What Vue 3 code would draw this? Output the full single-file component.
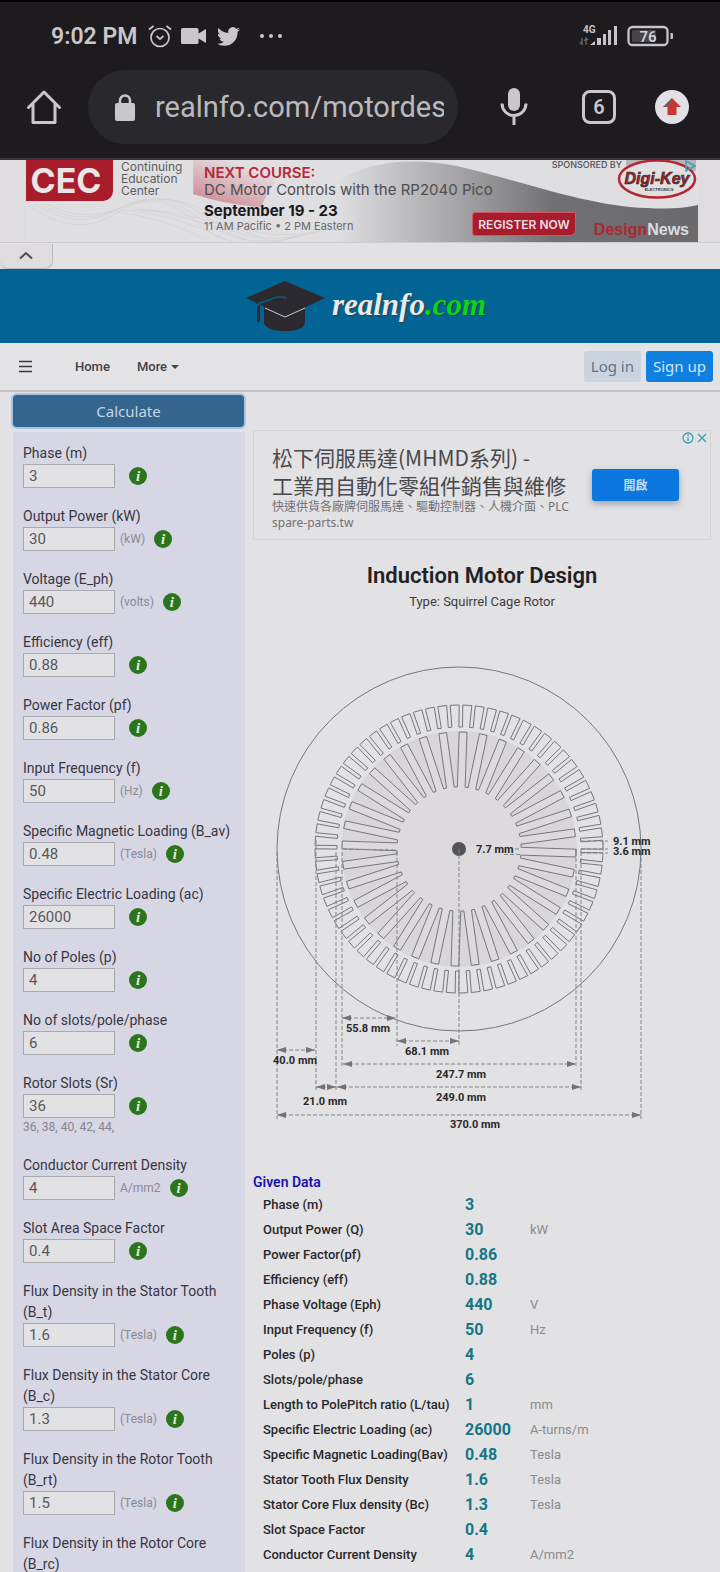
<script setup>
import { ref } from 'vue'

const fields = ref([
  { id: 'm', label: 'Phase (m)', value: '3' },
  { id: 'kw', label: 'Output Power (kW)', value: '30', unit: '(kW)' },
  { id: 'eph', label: 'Voltage (E_ph)', value: '440', unit: '(volts)' },
  { id: 'eff', label: 'Efficiency (eff)', value: '0.88' },
  { id: 'pf', label: 'Power Factor (pf)', value: '0.86' },
  { id: 'f', label: 'Input Frequency (f)', value: '50', unit: '(Hz)' },
  { id: 'bav', label: 'Specific Magnetic Loading (B_av)', value: '0.48', unit: '(Tesla)' },
  { id: 'ac', label: 'Specific Electric Loading (ac)', value: '26000' },
  { id: 'p', label: 'No of Poles (p)', value: '4' },
  { id: 'spp', label: 'No of slots/pole/phase', value: '6' },
  { id: 'sr', label: 'Rotor Slots (Sr)', value: '36', hint: '36, 38, 40, 42, 44,' },
  { id: 'ccd', label: 'Conductor Current Density', value: '4', unit: 'A/mm2' },
  { id: 'sf', label: 'Slot Area Space Factor', value: '0.4' },
  { id: 'bt', label: 'Flux Density in the Stator Tooth (B_t)', value: '1.6', unit: '(Tesla)' },
  { id: 'bc', label: 'Flux Density in the Stator Core (B_c)', value: '1.3', unit: '(Tesla)' },
  { id: 'brt', label: 'Flux Density in the Rotor Tooth (B_rt)', value: '1.5', unit: '(Tesla)' },
])

const given = [
  ['Phase (m)', '3', ''],
  ['Output Power (Q)', '30', 'kW'],
  ['Power Factor(pf)', '0.86', ''],
  ['Efficiency (eff)', '0.88', ''],
  ['Phase Voltage (Eph)', '440', 'V'],
  ['Input Frequency (f)', '50', 'Hz'],
  ['Poles (p)', '4', ''],
  ['Slots/pole/phase', '6', ''],
  ['Length to PolePitch ratio (L/tau)', '1', 'mm'],
  ['Specific Electric Loading (ac)', '26000', 'A-turns/m'],
  ['Specific Magnetic Loading(Bav)', '0.48', 'Tesla'],
  ['Stator Tooth Flux Density', '1.6', 'Tesla'],
  ['Stator Core Flux density (Bc)', '1.3', 'Tesla'],
  ['Slot Space Factor', '0.4', ''],
  ['Conductor Current Density', '4', 'A/mm2'],
]

// Motor cross-section, centred in the drawing
const CX = 206
const CY = 209

function place(x, r, deg) {
  const a = (deg * Math.PI) / 180
  const px = CX + x * Math.cos(a) + r * Math.sin(a)
  const py = CY + x * Math.sin(a) - r * Math.cos(a)
  return `${px.toFixed(1)},${py.toFixed(1)}`
}

// Outline of parallel-sided bars running between two radii
function ring(count, offset, half, from, to) {
  const pts = []
  for (let i = 0; i < count; i++) {
    const d = offset + (360 / count) * i
    pts.push(place(-half, from, d), place(-half, to, d), place(half, to, d), place(half, from, d))
  }
  return pts.join(' ')
}

const stator = ring(72, 0.8, 1.8, 144, 122)
const rotor = ring(36, 2, 3.9, 62, 117)

const guides = [
  [24, 212, 479], [63, 200, 452], [83, 212, 452], [89, 212, 427], [144, 212, 406],
  [206, 209, 406], [323, 212, 427], [328, 212, 452], [388, 212, 479],
]

const dims = [
  { x1: 89, x2: 143, y: 378, text: '55.8 mm', tx: 115, ty: 392 },
  { x1: 144, x2: 206, y: 401, text: '68.1 mm', tx: 174, ty: 415 },
  { x1: 24, x2: 62, y: 410, text: '40.0 mm', tx: 42, ty: 424 },
  { x1: 90, x2: 323, y: 424, text: '247.7 mm', tx: 208, ty: 438 },
  { x1: 63, x2: 83, y: 447, text: '21.0 mm', tx: 72, ty: 465 },
  { x1: 84, x2: 328, y: 447, text: '249.0 mm', tx: 208, ty: 461 },
  { x1: 24, x2: 388, y: 475, text: '370.0 mm', tx: 222, ty: 488 },
]
</script>

<template>
  <div class="page">
    <header class="chrome">
      <div class="status">
        <span class="clock">9:02 PM</span>
        <svg class="s-alarm" viewBox="0 0 24 24" width="24" height="24" fill="none" stroke="currentColor" stroke-width="1.7">
          <circle cx="12" cy="13.5" r="9" />
          <path d="M1 5.5 5.5 2M23 5.5 18.5 2M8.5 12l3.5 3.2 3.5-3.2" />
        </svg>
        <svg class="s-cam" viewBox="0 0 26 16" width="26" height="16" fill="currentColor">
          <path d="M1.500 0H16q1.500 0 1.500 1.500V5.500L25 1V15L17.500 10.500V14.500Q17.500 16 16 16H1.500Q0 16 0 14.500V1.500Q0 0 1.500 0Z" />
        </svg>
        <svg class="s-bird" viewBox="0 0 24 24" width="23" height="23" fill="currentColor">
          <path d="M23.950 4.570a10 10 0 0 1-2.820.770 4.960 4.960 0 0 0 2.160-2.720 9.900 9.900 0 0 1-3.120 1.180 4.920 4.920 0 0 0-8.380 4.480C7.690 8.090 4.070 6.130 1.640 3.160a4.820 4.820 0 0 0-.660 2.470c0 1.710.870 3.210 2.180 4.100a4.900 4.900 0 0 1-2.220-.620v.060a4.920 4.920 0 0 0 3.940 4.830 5 5 0 0 1-2.210.080 4.940 4.940 0 0 0 4.600 3.420A9.870 9.870 0 0 1 0 19.540a13.990 13.990 0 0 0 7.550 2.210c9.050 0 13.990-7.500 13.990-13.990 0-.210 0-.420-.010-.630a9.940 9.940 0 0 0 2.460-2.550z" />
        </svg>
        <svg class="s-dots" viewBox="0 0 24 6" width="24" height="6" fill="currentColor">
          <circle cx="3" cy="3" r="2" /><circle cx="12" cy="3" r="2" /><circle cx="21" cy="3" r="2" />
        </svg>
        <div class="signal">
          <svg viewBox="0 0 40 24" width="40" height="24">
            <text x="4" y="9" class="net">4G</text>
            <path d="M3 14v7M1 18l2 3M7 21v-7M5.500 17l1.500-3 2 2" fill="none" stroke="#6b696c" stroke-width="1.300" />
            <g fill="#c6c4c8">
              <path d="M11 21 16 17V21Z" /><rect x="18" y="14" width="4" height="7" /><rect x="24" y="10" width="3" height="11" />
              <rect x="29" y="6" width="3" height="15" /><rect x="35" y="2" width="3" height="19" />
            </g>
          </svg>
        </div>
        <svg class="battery" viewBox="0 0 48 22" width="48" height="22">
          <rect x="1.500" y="2" width="39" height="18" rx="4" fill="none" stroke="#c6c4c8" stroke-width="2.300" />
          <rect x="5" y="5" width="24" height="12" rx="1" fill="#464448" />
          <path d="M43.500 8h1.500a1 1 0 0 1 1 1v4a1 1 0 0 1-1 1h-1.500z" fill="#c6c4c8" />
          <text x="21" y="16.500" text-anchor="middle" class="pct">76</text>
        </svg>
      </div>
      <div class="toolbar">
        <button class="icon-btn" type="button" aria-label="Home">
          <svg viewBox="0 0 36 36" width="36" height="36" fill="none" stroke="currentColor" stroke-width="3">
            <path d="M2.500 18.500 18 3 33.500 18.500M7 15v18.500h22V15" stroke-linejoin="round" stroke-linecap="round" />
          </svg>
        </button>
        <div class="omnibox">
          <svg viewBox="0 0 20 27" width="20" height="27">
            <rect x="0" y="9" width="20" height="18" rx="2" fill="currentColor" />
            <path d="M5 10V6.500a5 5 0 0 1 10 0V10" fill="none" stroke="currentColor" stroke-width="2.500" />
          </svg>
          <input class="url" aria-label="Address" value="realnfo.com/motordesign" />
        </div>
        <button class="icon-btn mic" type="button" aria-label="Voice search">
          <svg viewBox="0 0 28 38" width="28" height="38">
            <rect x="8" y="0" width="12" height="23" rx="6" fill="currentColor" />
            <path d="M2 15.500a12 12 0 0 0 24 0M14 28v9" fill="none" stroke="currentColor" stroke-width="3" />
          </svg>
        </button>
        <button class="tabs" type="button" aria-label="Open tabs">6</button>
        <button class="icon-btn update" type="button" aria-label="Update browser">
          <svg viewBox="0 0 34 34" width="34" height="34">
            <circle cx="17" cy="17" r="17" fill="#e2e0e4" />
            <path d="M17 8 26 17H21.500V25H12.500V17H8Z" fill="#c5372f" />
            <path d="M17 8 8 17h4.500L17 12Z" fill="#7b5a5a" />
          </svg>
        </button>
      </div>
    </header>

    <section class="ad-strip">
      <div class="banner">
        <svg class="art" viewBox="0 0 671 82" preserveAspectRatio="none" aria-hidden="true">
          <defs>
            <linearGradient id="gr" x1="0" x2="1"><stop offset="0" stop-color="#dfdee0" /><stop offset=".35" stop-color="#a2a1a3" /><stop offset=".6" stop-color="#717072" /><stop offset="1" stop-color="#6a696b" /></linearGradient>
            <linearGradient id="pk" x1="0" y1="1" x2=".8" y2="0"><stop offset="0" stop-color="#cf7d88" /><stop offset=".8" stop-color="#e1dfe2" /></linearGradient>
          </defs>
          <rect width="671" height="82" fill="#dfdee0" />
          <g fill="none" stroke="#cfced1" stroke-width=".6">
            <path d="M2 45Q50 80 90 53T170 62T270 76" /><path d="M8 44Q52 72 92 49T176 60T280 74" />
            <path d="M14 44Q54 68 96 47T182 58T290 72" /><path d="M20 44Q58 64 100 46T188 56T300 70" />
            <path d="M90 52Q140 58 180 80M96 50Q150 54 200 80M104 49Q160 52 220 80M112 49Q170 52 240 80" />
          </g>
          <path d="M167 0H270Q245 20 235 47Q200 45 167 34Z" fill="url(#pk)" />
          <path d="M310 82V22Q355 -8 430 6C500 22 560 46 620 48Q650 50 671 45V82Z" fill="url(#gr)" />
        </svg>
        <strong class="cec">CEC</strong>
        <span class="center-name">Continuing<br />Education<br />Center</span>
        <div class="course">
          <strong class="next">NEXT COURSE:</strong>
          <span class="topic">DC Motor Controls with the RP2040 Pico</span>
          <strong class="date">September 19 - 23</strong>
          <span class="hours">11 AM Pacific • 2 PM Eastern</span>
        </div>
        <button class="register" type="button">REGISTER NOW</button>
        <span class="sponsor">SPONSORED BY</span>
        <svg class="digikey" viewBox="0 0 82 40" width="82" height="40">
          <rect x="10" y="0" width="70" height="11" fill="#b5b4b7" />
          <ellipse cx="41" cy="19" rx="38" ry="18.500" fill="#e0dfe1" stroke="#b32630" stroke-width="2.500" />
          <text x="41" y="24" text-anchor="middle" class="dk">Digi-Key</text>
          <text x="43" y="31" text-anchor="middle" class="dk-sub">ELECTRONICS</text>
          <path d="M70 1 79 6 70 11Z" fill="none" stroke="#37a6ba" stroke-width="1.500" />
        </svg>
        <strong class="design-news"><span>Design</span>News</strong>
      </div>
      <div class="strip-foot">
        <button class="collapse" type="button" aria-label="Collapse advert">
          <svg viewBox="0 0 14 9" width="14" height="9"><path d="M1 7.500 7 2l6 5.500" fill="none" stroke="#4c4b4e" stroke-width="2" /></svg>
        </button>
      </div>
    </section>

    <a class="brand" href="#">
      <svg viewBox="0 0 82 51" width="82" height="51">
        <path d="M19 26V42Q22 50 40 50T60 42V26L40 36Z" fill="#2c2a2e" />
        <path d="M1 17 40 0 80 17 40 36Z" fill="#2c2a2e" />
        <path d="M20 27 40 36 60 27" fill="none" stroke="#c5cdd4" stroke-width="1" />
        <path d="M41 17Q34 14 24 19L14 22V41" fill="none" stroke="#036090" stroke-width="1.400" />
        <path d="M12 25 15 24V41H12Z" fill="#2c2a2e" />
      </svg>
      <span class="brand-name">realnfo<em>.com</em></span>
    </a>

    <nav class="nav">
      <button class="menu" type="button" aria-label="Menu">
        <svg viewBox="0 0 13 13" width="13" height="13"><path d="M0 1.500h13M0 6.500h13M0 11.500h13" stroke="#3a393c" stroke-width="1.400" /></svg>
      </button>
      <a class="nav-link home" href="#">Home</a>
      <a class="nav-link more" href="#">More <i class="caret"></i></a>
      <a class="btn login" href="#">Log in</a>
      <a class="btn signup" href="#">Sign up</a>
    </nav>

    <main class="content">
      <form class="side" @submit.prevent>
        <button class="calculate" type="submit">Calculate</button>
        <div class="panel">
          <div v-for="f in fields" :key="f.id" class="field">
            <label :for="f.id">{{ f.label }}</label>
            <div class="entry">
              <input :id="f.id" v-model="f.value" type="text" />
              <span class="unit">{{ f.unit }}</span>
              <button class="info" type="button" :aria-label="'About ' + f.label">i</button>
            </div>
            <small v-if="f.hint" class="hint">{{ f.hint }}</small>
          </div>
          <div class="field"><span class="label">Flux Density in the Rotor Core (B_rc)</span></div>
        </div>
      </form>

      <div class="results">
        <aside class="ad">
          <div class="ad-copy">
            <a class="ad-title" href="#">松下伺服馬達(MHMD系列) -<br />工業用自動化零組件銷售與維修</a>
            <span class="ad-desc">快速供貨各廠牌伺服馬達、驅動控制器、人機介面、PLC</span>
            <span class="ad-site">spare-parts.tw</span>
          </div>
          <button class="ad-open" type="button">開啟</button>
          <svg class="ad-marks" viewBox="0 0 26 12" width="26" height="12" fill="none" stroke="#3a9fb3" stroke-width="1.300">
            <circle cx="6" cy="6" r="5" /><path d="M6 5v4M6 2.500v1.500M16 2l8 8M24 2l-8 8" />
          </svg>
        </aside>

        <h1>Induction Motor Design</h1>
        <p class="type">Type: Squirrel Cage Rotor</p>

        <svg class="motor" viewBox="0 0 458 522" role="img" aria-label="Motor cross-section">
          <defs>
            <marker id="arrow" viewBox="0 0 9 6" refX="9" refY="3" markerWidth="9" markerHeight="6" markerUnits="userSpaceOnUse" orient="auto-start-reverse">
              <path d="M0 0 9 3 0 6Z" fill="#747376" />
            </marker>
          </defs>
          <circle :cx="CX" :cy="CY" r="182" class="outline" />
          <circle :cx="CX" :cy="CY" r="118" fill="#d8d6da" />
          <polygon :points="stator" class="outline" />
          <polygon :points="rotor" class="outline inner" />
          <circle :cx="CX" :cy="CY" r="7" fill="#545356" />
          <line v-for="g in guides" :key="g[0]" :x1="g[0]" :x2="g[0]" :y1="g[1]" :y2="g[2]" class="dash guide" />
          <path d="M262 209H268M251 214.500H268M323 209V216M328 201H355M328 209H355M328 213H355M350 201V213" class="dash" />
          <path d="M90 209 144 210" class="dash" />
          <g v-for="d in dims" :key="d.text">
            <line :x1="d.x1" :x2="d.x2" :y1="d.y" :y2="d.y" class="dash" marker-start="url(#arrow)" marker-end="url(#arrow)" />
            <text :x="d.tx" :y="d.ty" text-anchor="middle" class="dim">{{ d.text }}</text>
          </g>
          <text x="223" y="213" class="dim">7.7 mm</text>
          <text x="360" y="205" class="dim">9.1 mm</text>
          <text x="360" y="215" class="dim">3.6 mm</text>
        </svg>

        <h2>Given Data</h2>
        <table class="data">
          <tbody>
            <tr v-for="row in given" :key="row[0]">
              <th scope="row">{{ row[0] }}</th>
              <td class="value">{{ row[1] }}</td>
              <td class="measure">{{ row[2] }}</td>
            </tr>
          </tbody>
        </table>
      </div>
    </main>
  </div>
</template>

<style>
body {
  background: #e2e1e4;
}
</style>

<style scoped>
* {
  box-sizing: border-box;
}
.page {
  display: flex;
  flex-direction: column;
  min-height: 100vh;
  font-family: Roboto, "Noto Sans CJK TC", sans-serif;
  color: #333238;
}
button,
input {
  font: inherit;
  margin: 0;
  padding: 0;
  border: 0;
}
a {
  text-decoration: none;
}
svg {
  display: block;
  flex: none;
}

/* Browser chrome */
.chrome {
  background: #1d1b1e;
  border-top: 2px solid #000;
  border-bottom: 2px solid #373639;
  color: #c9c7cb;
}
.status {
  display: flex;
  align-items: center;
  height: 68px;
  padding: 0 45px 0 51px;
}
.clock {
  font-size: 23px;
  font-weight: 600;
}
.s-alarm {
  margin-left: 11px;
}
.s-cam {
  margin-left: 9px;
}
.s-bird {
  margin-left: 10px;
}
.s-dots {
  margin-left: 19px;
}
.signal {
  margin-left: auto;
}
.net {
  font: bold 10px Roboto, sans-serif;
  fill: #c6c4c8;
}
.battery {
  margin-left: 8px;
}
.pct {
  font: 600 15px Roboto, sans-serif;
  fill: #d2d0d4;
}
.toolbar {
  display: flex;
  align-items: center;
  height: 88px;
  padding: 0 31px 14px 26px;
}
.icon-btn {
  background: none;
  color: inherit;
}
.omnibox {
  flex: 1;
  min-width: 0;
  display: flex;
  align-items: center;
  gap: 20px;
  height: 74px;
  margin-left: 26px;
  padding: 0 14px 0 27px;
  border-radius: 37px;
  background: #29292d;
}
.url {
  flex: 1;
  min-width: 0;
  height: 40px;
  background: none;
  color: #bbb9bd;
  font-size: 29px;
}
.mic {
  margin-left: 42px;
}
.tabs {
  width: 34px;
  height: 34px;
  margin-left: 54px;
  border: 3px solid #c9c7cb;
  border-radius: 8px;
  background: none;
  color: #c9c7cb;
  font-size: 20px;
  font-weight: 600;
  line-height: 28px;
}
.update {
  margin-left: 39px;
}

/* Top advert */
.ad-strip {
  background: #dfdcdf;
}
.banner {
  position: relative;
  display: flex;
  height: 82px;
  margin: 0 22px 0 26px;
  font-family: Inter, sans-serif;
}
.banner > * {
  position: relative;
}
.banner > .art {
  position: absolute;
  inset: 0;
  width: 100%;
  height: 100%;
}
.cec {
  width: 87px;
  height: 41px;
  padding-right: 7px;
  border-radius: 0 0 10px 0;
  background: #a91c2b;
  color: #e8e6e9;
  font-size: 34px;
  line-height: 41px;
  text-align: center;
}
.center-name {
  width: 84px;
  padding-left: 8px;
  padding-top: 1px;
  font-size: 12px;
  line-height: 12px;
  color: #5f5e61;
}
.course {
  display: flex;
  flex-direction: column;
  width: 300px;
  padding: 4px 0 0 7px;
  white-space: nowrap;
}
.next {
  font-size: 15px;
  line-height: 18px;
  font-weight: 600;
  color: #b5293a;
}
.topic {
  font-size: 15px;
  line-height: 16px;
  color: #4e4d50;
}
.date {
  padding-top: 4px;
  font-size: 15px;
  line-height: 18px;
  color: #19181b;
}
.hours {
  font-size: 11px;
  line-height: 12px;
  color: #6a696c;
}
.banner > .register {
  position: absolute;
  right: 122px;
  bottom: 6px;
  width: 104px;
  height: 24px;
  border: 1px solid #cf5966;
  border-radius: 3px 0 6px 3px;
  background: #a91c2b;
  color: #e6dfe2;
  font-size: 12px;
  font-weight: 600;
}
.banner > .sponsor {
  position: absolute;
  right: 76px;
  top: 0;
  font-size: 9px;
  line-height: 10px;
  font-weight: 500;
  color: #525154;
}
.banner > .digikey {
  position: absolute;
  right: 0;
  top: 0;
}
.dk {
  font: italic bold 16px "Liberation Sans", sans-serif;
  fill: #a8222c;
  stroke: #252427;
  stroke-width: 0.6px;
}
.dk-sub {
  font: bold 4px "Liberation Sans", sans-serif;
  fill: #333;
}
.banner > .design-news {
  position: absolute;
  right: 9px;
  bottom: 2px;
  font: bold 16px/20px "Liberation Sans Narrow", "Liberation Sans", sans-serif;
  color: #dddce0;
}
.design-news span {
  color: #ab2832;
}
.strip-foot {
  display: flex;
  height: 27px;
  padding-top: 1px;
  border-top: 1px solid #cecccf;
  background: #e2e1e4;
}
.collapse {
  display: flex;
  align-items: center;
  justify-content: center;
  width: 53px;
  padding-bottom: 2px;
  background: #dedcdf;
  border-right: 1px solid #bbb9bc;
  border-bottom: 1px solid #bbb9bc;
  border-radius: 0 0 8px 8px;
}

/* Site header */
.brand {
  display: flex;
  align-items: center;
  justify-content: center;
  gap: 5px;
  height: 74px;
  padding-left: 11px;
  background: #016495;
}
.brand-name {
  padding-bottom: 3px;
  font: italic bold 31px/40px "Liberation Serif", serif;
  color: #e9eaee;
  text-shadow: 1px 1px 1px #3c3a3a;
}
.brand-name em {
  color: #0bd41c;
}
.nav {
  display: flex;
  align-items: center;
  height: 49px;
  padding: 0 7px 0 19px;
  background: #e3e2e5;
  border-bottom: 2px solid #c5c4c6;
}
.menu {
  background: none;
}
.nav-link {
  font: 500 13px/20px Roboto, sans-serif;
  color: #444346;
}
.home {
  margin-left: 43px;
}
.more {
  display: flex;
  align-items: center;
  gap: 4px;
  margin-left: 27px;
}
.caret {
  border: 4px solid transparent;
  border-top-color: #444346;
  border-bottom: 0;
}
.btn {
  height: 31px;
  padding: 0 7px;
  border-radius: 3px;
  font: 15px/31px "Noto Sans", sans-serif;
}
.login {
  margin-left: auto;
  background: #cbd4de;
  color: #5c7489;
}
.signup {
  margin-left: 5px;
  background: #0f80e0;
  color: #d5e3f1;
}

/* Form column */
.content {
  flex: 1;
  display: grid;
  grid-template-columns: 232px minmax(0, 1fr);
  column-gap: 8px;
  padding: 3px 9px 0 13px;
}
.side {
  display: flex;
  flex-direction: column;
  gap: 5px;
}
.calculate {
  height: 32px;
  margin-right: 1px;
  border-radius: 4px;
  background: #33658f;
  box-shadow: 0 0 0 2px #a5c5e6;
  color: #c6d5e2;
  font: 15px "Noto Sans", sans-serif;
}
.panel {
  flex: 1;
  padding: 11px 10px 0;
  background: #d7d6e5;
}
.field {
  padding-bottom: 18px;
}
.field:last-child {
  padding-bottom: 0;
}
label,
.label {
  display: block;
  font-size: 14px;
  line-height: 21px;
  color: #37363f;
}
.entry {
  display: flex;
  align-items: center;
}
.entry input {
  width: 92px;
  height: 24px;
  padding: 0 5px;
  border: 1px solid #aaa9ae;
  border-radius: 0;
  background: #e2e1e4;
  color: #59585c;
  font-size: 15px;
}
.unit {
  margin: 0 9px 0 5px;
  font-size: 12px;
  color: #8a8993;
}
.info {
  width: 18px;
  height: 18px;
  border-radius: 50%;
  background: #2b751c;
  color: #e2e8df;
  font: italic bold 15px/17px "Liberation Serif", serif;
  text-align: center;
}
.hint {
  display: block;
  font-size: 12px;
  line-height: 19px;
  color: #85848e;
}

/* Results column */
.ad {
  position: relative;
  display: flex;
  align-items: center;
  justify-content: space-between;
  height: 110px;
  margin-top: 35px;
  padding: 0 31px 0 18px;
  border: 1px solid #d4d3d6;
  font-family: "Noto Sans", "Noto Sans CJK TC", sans-serif;
}
.ad-copy {
  display: flex;
  flex-direction: column;
  padding-top: 3px;
  white-space: nowrap;
}
.ad-title {
  font-family: "Noto Sans CJK TC", sans-serif;
  font-size: 21px;
  line-height: 28px;
  color: #49484b;
}
.ad-desc,
.ad-site {
  font-size: 12px;
  line-height: 16px;
  color: #727174;
}
.ad-open {
  width: 87px;
  height: 32px;
  border-radius: 3px;
  background: #0b77df;
  box-shadow: 0 3px 7px #a3a3b0;
  color: #c1dcf3;
  font-size: 12px;
  font-weight: bold;
}
.ad-marks {
  position: absolute;
  top: 1px;
  right: 2px;
}
h1 {
  margin: 21px 0 0;
  font-size: 22px;
  line-height: 30px;
  font-weight: 600;
  text-align: center;
  color: #222125;
}
.type {
  margin: 2px 0 0;
  font-size: 13px;
  line-height: 18px;
  text-align: center;
  color: #3d3c40;
}
.motor {
  width: 100%;
  height: auto;
  margin-top: 29px;
}
.outline {
  fill: none;
  stroke: #777679;
  stroke-width: 1;
}
.inner {
  fill: #dcdadd;
}
.dash {
  fill: none;
  stroke: #858487;
  stroke-width: 1;
  stroke-dasharray: 4 2;
}
.dim {
  font: bold 11px Roboto, sans-serif;
  fill: #29282b;
}
h2 {
  margin: 10px 0 0;
  font-size: 14px;
  line-height: 20px;
  font-weight: 600;
  color: #1b12ad;
}
.data {
  width: 100%;
  border-collapse: collapse;
  table-layout: fixed;
}
.data th,
.data td {
  height: 25px;
  padding: 0;
  text-align: left;
}
.data th {
  width: 212px;
  padding-left: 10px;
  font-size: 13px;
  font-weight: 500;
  color: #29282b;
}
.data .value {
  width: 65px;
  font-size: 16px;
  font-weight: 700;
  color: #147785;
}
.data .measure {
  font-size: 13px;
  color: #8b8a8d;
}
</style>
